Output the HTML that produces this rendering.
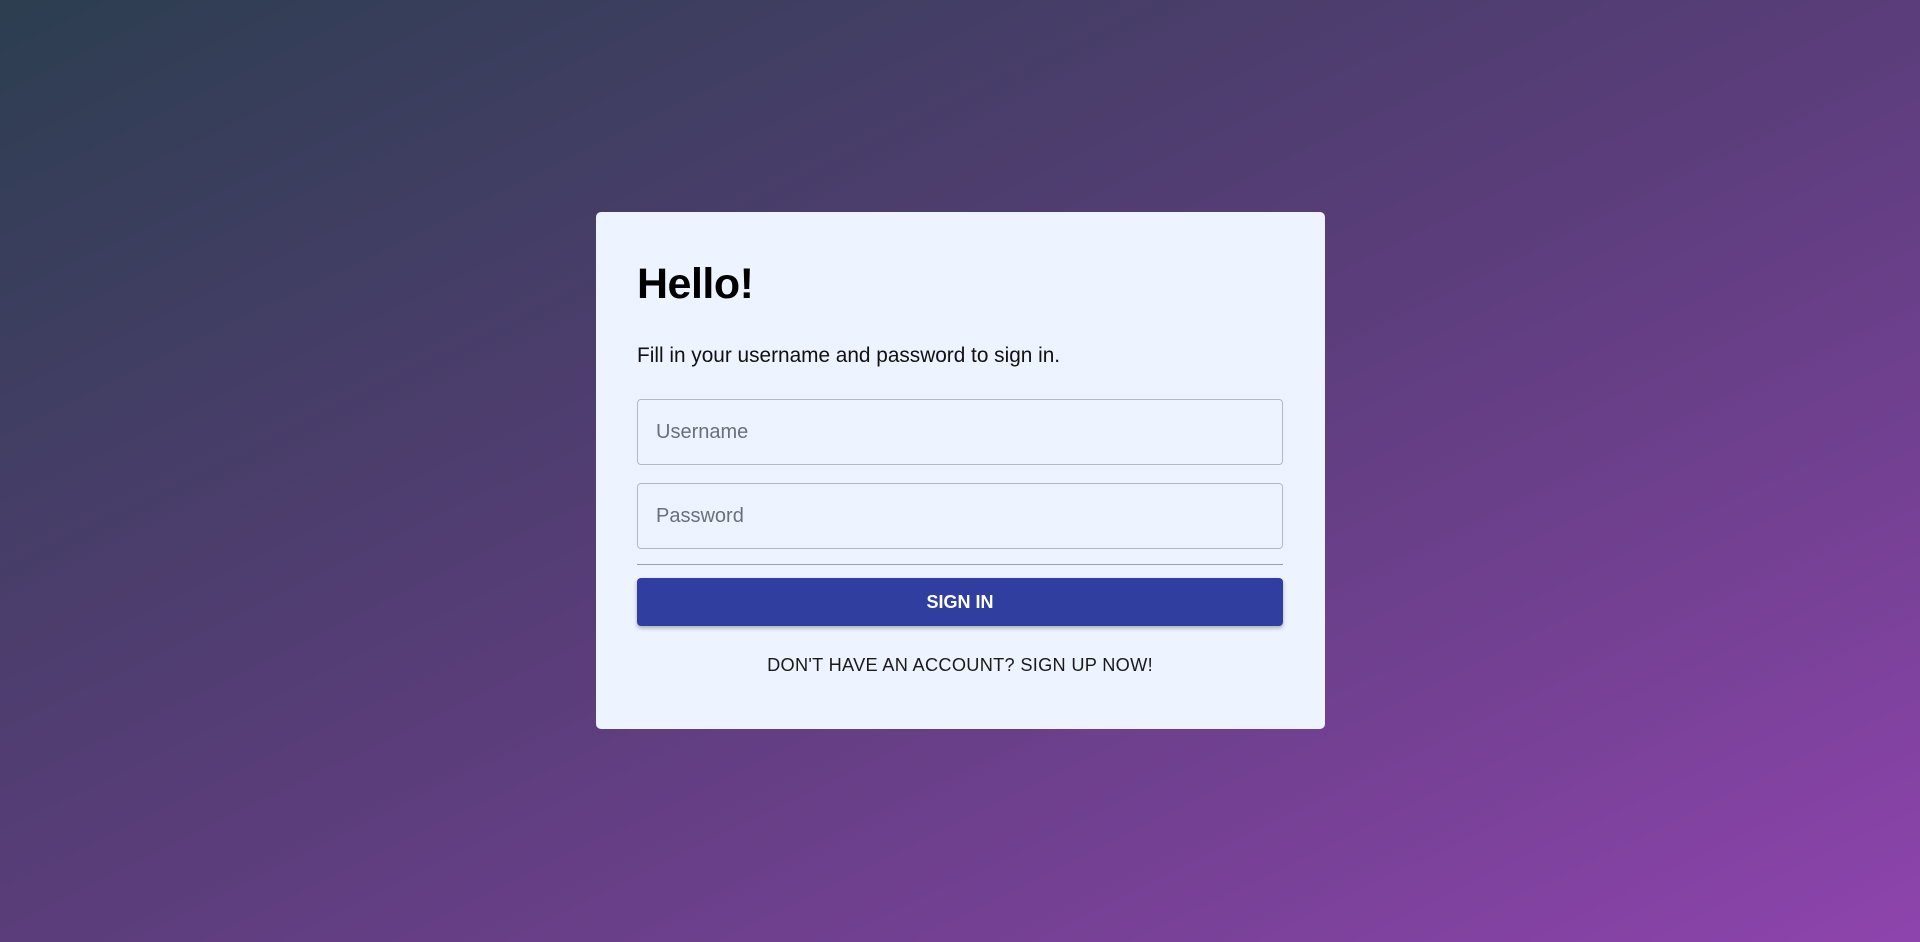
<!DOCTYPE html>
<html><head><meta charset="utf-8"><style>
html,body{margin:0;padding:0;width:1920px;height:942px;overflow:hidden}
body{background:linear-gradient(to bottom right,#2c3e50 0%,#5a3d7a 50%,#8e44ad 100%);font-family:"Liberation Sans",sans-serif;position:relative}
.card{position:absolute;left:596px;top:212px;width:729px;height:517px;background:#edf3ff;border-radius:5px;box-sizing:border-box;padding:0 41px}
h1{position:absolute;left:41px;top:48px;margin:0;font-size:43px;font-weight:bold;color:#000;letter-spacing:-0.5px}
.sub{position:absolute;left:41px;top:132px;font-size:20.8px;color:#111}
.inp{position:absolute;left:41px;width:646px;height:66px;border:1px solid #b4b9c6;border-radius:4px;box-sizing:border-box;font-size:20px;color:#6b6f78;padding-left:18px;line-height:64px}
.hr{position:absolute;left:41px;top:352px;width:646px;height:1px;background:#9a9ca3}
.btn{position:absolute;left:41px;top:366px;width:646px;height:48px;background:#303f9f;border-radius:4px;color:#fff;font-weight:bold;font-size:18px;text-align:center;line-height:48px;box-shadow:0 2px 4px rgba(0,0,0,.3)}
.link{position:absolute;left:41px;top:443px;width:646px;text-align:center;font-size:18.2px;color:#1a1a1a;letter-spacing:0.3px}
</style></head><body>
<div class="card">
<h1>Hello!</h1>
<div class="sub">Fill in your username and password to sign in.</div>
<div class="inp" style="top:187px">Username</div>
<div class="inp" style="top:271px">Password</div>
<div class="hr"></div>
<div class="btn">SIGN IN</div>
<div class="link">DON'T HAVE AN ACCOUNT? SIGN UP NOW!</div>
</div>
</body></html>
